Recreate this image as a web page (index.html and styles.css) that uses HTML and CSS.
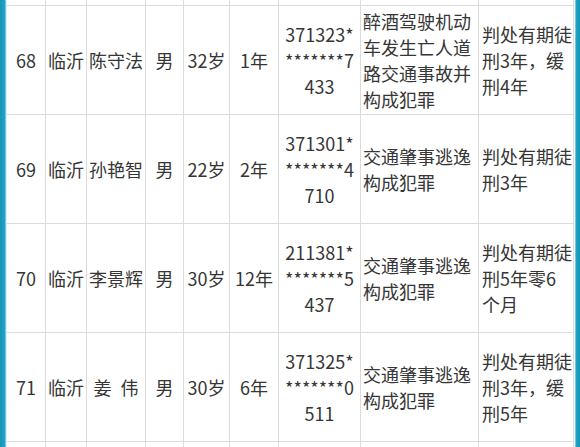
FILE: index.html
```html
<!DOCTYPE html>
<html lang="zh">
<head>
<meta charset="utf-8">
<link rel="stylesheet" href="styles.css">
</head>
<body>
<div class="frame">
  <div class="bar bar-left"></div>
  <div class="sheet">
    <div class="grid">
      <div class="c"></div><div class="c"></div><div class="c"></div><div class="c"></div><div class="c"></div><div class="c"></div><div class="c"></div><div class="c"></div><div class="c"></div>

      <div class="c ctr">68</div><div class="c ctr">临沂</div><div class="c ctr">陈守法</div><div class="c ctr">男</div><div class="c ctr">32岁</div><div class="c ctr">1年</div>
      <div class="c ctr">371323*<br>*******7<br>433</div>
      <div class="c lft">醉酒驾驶机动<br>车发生亡人道<br>路交通事故并<br>构成犯罪</div>
      <div class="c lft sent">判处有期徒<br>刑3年，缓<br>刑4年</div>

      <div class="c ctr">69</div><div class="c ctr">临沂</div><div class="c ctr">孙艳智</div><div class="c ctr">男</div><div class="c ctr">22岁</div><div class="c ctr">2年</div>
      <div class="c ctr">371301*<br>*******4<br>710</div>
      <div class="c lft">交通肇事逃逸<br>构成犯罪</div>
      <div class="c lft sent">判处有期徒<br>刑3年</div>

      <div class="c ctr">70</div><div class="c ctr">临沂</div><div class="c ctr">李景辉</div><div class="c ctr">男</div><div class="c ctr">30岁</div><div class="c ctr">12年</div>
      <div class="c ctr">211381*<br>*******5<br>437</div>
      <div class="c lft">交通肇事逃逸<br>构成犯罪</div>
      <div class="c lft sent">判处有期徒<br>刑5年零6<br>个月</div>

      <div class="c ctr">71</div><div class="c ctr">临沂</div><div class="c ctr name-sp">姜 伟</div><div class="c ctr">男</div><div class="c ctr">30岁</div><div class="c ctr">6年</div>
      <div class="c ctr">371325*<br>*******0<br>511</div>
      <div class="c lft">交通肇事逃逸<br>构成犯罪</div>
      <div class="c lft sent">判处有期徒<br>刑3年，缓<br>刑5年</div>

      <div class="c"></div><div class="c"></div><div class="c"></div><div class="c"></div><div class="c"></div><div class="c"></div><div class="c"></div><div class="c"></div><div class="c"></div>
    </div>
  </div>
  <div class="gap"></div>
  <div class="bar bar-right"></div>
</div>
</body>
</html>
```

FILE: styles.css
```css
html, body {
  margin: 0;
  padding: 0;
  background: #ffffff;
}
.frame {
  display: flex;
  width: 580px;
  height: 447px;
  overflow: hidden;
}
.bar {
  flex: none;
  height: 447px;
}
.bar-left {
  width: 7px;
  background: linear-gradient(to right, #1a93b6 0, #1ca6cc 5px, #bfe9f4 6px, #eaf8fc 7px);
}
.bar-right {
  width: 5px;
  background: linear-gradient(to right, #bfe9f4 0, #1ca6cc 1px, #1a93b6 5px);
}
.gap {
  flex: none;
  width: 1px;
  background: #ffffff;
}
.sheet {
  flex: none;
  width: 567px;
  height: 447px;
  overflow: hidden;
}
.grid {
  display: grid;
  grid-template-columns: 38px 40px 58px 37px 45px 48px 81px 117px 94px;
  grid-template-rows: 5px 108px 108px 108px 108px 20px;
  gap: 1px;
  background: #dcdcdc;
  border-right: 1px solid #dcdcdc;
  width: 566px;
  font-family: "Noto Sans CJK SC", "Noto Sans", sans-serif;
  font-size: 18px;
  line-height: 26px;
  color: #363636;
}
.c {
  background: #ffffff;
  display: flex;
  align-items: center;
  white-space: pre;
  overflow: hidden;
}
.name-sp {
  word-spacing: 5px;
}
.ctr {
  justify-content: center;
  text-align: center;
}
.lft {
  justify-content: flex-start;
  text-align: left;
  padding-left: 2px;
}
.sent {
  padding-left: 3px;
}
```
